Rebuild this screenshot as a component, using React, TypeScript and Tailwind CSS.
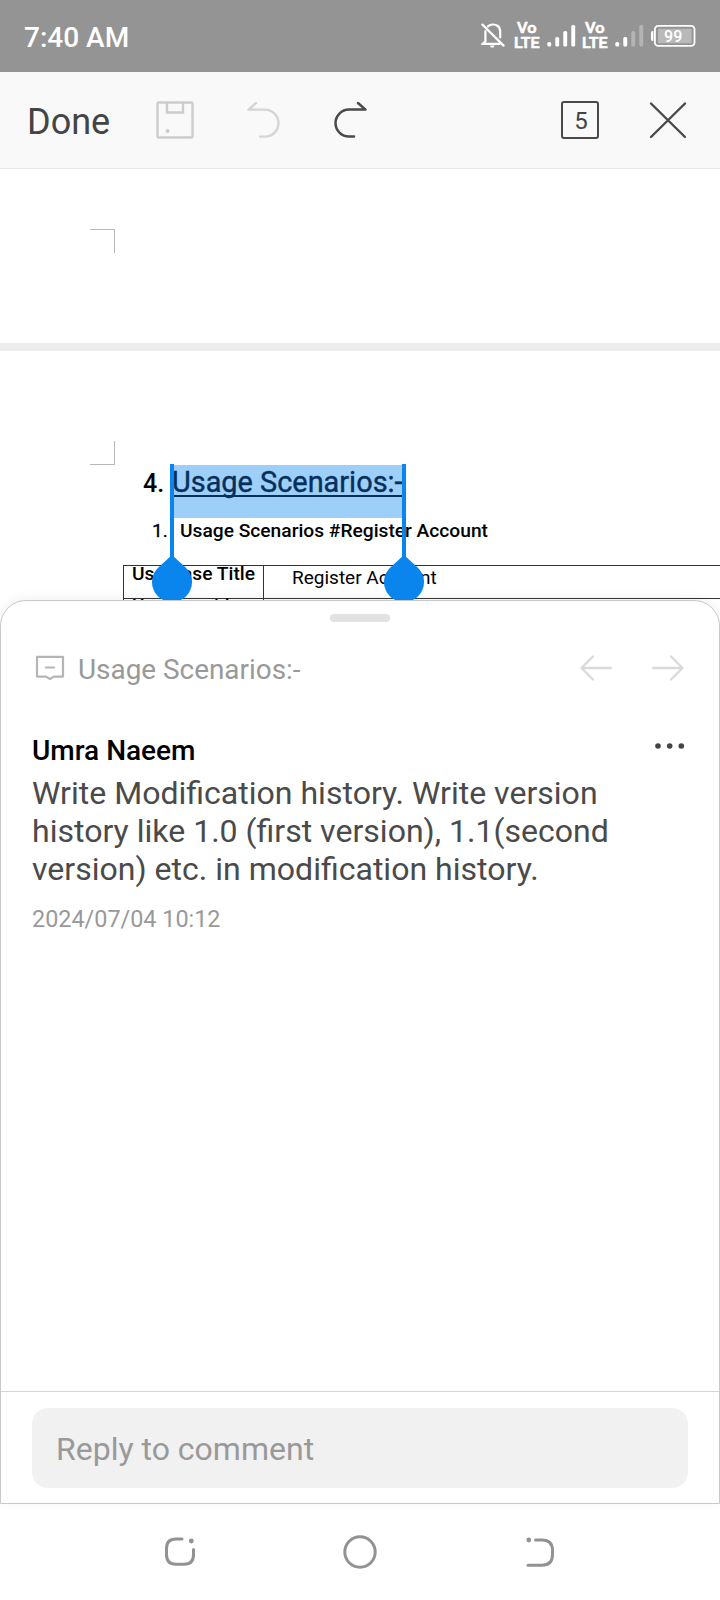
import React from "react";

function Bell() {
  return (
    <svg className="ml-auto h-[26px] w-[24px] shrink-0" viewBox="0 0 24 26" fill="none" stroke="#fff" strokeWidth="2.2" strokeLinecap="round">
      <path d="M1.4 1.6 L22.6 22.6" />
      <path d="M7 3.4 C9.5 1 14 0.9 16.8 3 C18.9 4.6 19.2 7 19.2 9 V14.5" />
      <path d="M4.4 8 V18.2 L1.6 20.9 H18.6" />
      <path d="M8.8 22.6 H13.6 L12.6 24.6 H9.8 Z" fill="#fff" stroke="none" />
    </svg>
  );
}

function VoLte({ className }: { className: string }) {
  return (
    <svg className={`h-[30px] w-[28px] shrink-0 overflow-visible ${className}`} viewBox="0 0 28 30" fill="#fff" stroke="#fff" strokeWidth="0.7" strokeLinejoin="round" fontFamily="Roboto, sans-serif" fontWeight="500">
      <text x="3" y="12.4" fontSize="15" textLength="19.5" lengthAdjust="spacingAndGlyphs">Vo</text>
      <text x="0" y="27.2" fontSize="15.5" textLength="25.6" lengthAdjust="spacingAndGlyphs">LTE</text>
    </svg>
  );
}

function Signal({ level, className }: { level: number; className: string }) {
  const tops = [18, 13, 7, 1];
  return (
    <svg className={`h-[24px] w-[29px] shrink-0 ${className}`} viewBox="0 0 29 24" fill="#fff">
      {tops.map((y, i) => (
        <rect key={y} x={0.3 + i * 8} y={y} width="3.9" height={22.6 - y} rx="1.6" opacity={i < level ? 1 : 0.3} />
      ))}
    </svg>
  );
}

function Battery() {
  return (
    <svg className="ml-[6px] h-[24px] w-[46px] shrink-0" viewBox="0 0 46 24" fontFamily="Roboto, sans-serif">
      <path d="M3.4 7 H2.6 Q1 7 1 9 V15 Q1 17 2.6 17 H3.4 Z" fill="#fff" />
      <rect x="4.9" y="1.9" width="39.6" height="20" rx="3.4" fill="none" stroke="#fff" strokeWidth="1.8" />
      <rect x="8" y="4.8" width="33.6" height="14.4" rx="1" fill="#b9b9b9" />
      <text x="23.2" y="17.6" textAnchor="middle" fontSize="16" fontWeight="500" fill="#fff">99</text>
    </svg>
  );
}

function Drop({ className }: { className: string }) {
  return (
    <div className={`absolute top-[464px] h-[136px] w-[40px] ${className}`}>
      <svg className="h-full w-full" viewBox="0 0 40 136" fill="#0a85ee">
        <rect x="18" y="0" width="4" height="96" />
        <path d="M20 91 L33.4 103.2 A20 20 0 1 1 6.6 103.2 Z" />
      </svg>
    </div>
  );
}

export default function App() {
  return (
    <div className="relative flex h-[1600px] w-[720px] flex-col overflow-hidden bg-white font-[Roboto,sans-serif] whitespace-nowrap">
      <header className="flex h-[72px] shrink-0 items-center bg-[#949494] pr-[24px] pl-[24px] text-white">
        <span className="pt-[3px] text-[28px] font-medium">7:40 AM</span>
        <Bell />
        <VoLte className="ml-[9px]" />
        <Signal level={4} className="ml-[5px]" />
        <VoLte className="ml-[6px]" />
        <Signal level={2} className="ml-[5px]" />
        <Battery />
      </header>

      <nav className="flex h-[97px] shrink-0 items-center border-b border-[#e6e6e6] bg-[#f9f9f9] pl-[27px] text-[#444]">
        <span className="w-[129px] pt-[3px] text-[36px]">Done</span>
        <svg className="h-[38px] w-[38px]" viewBox="0 0 38 38" fill="none" stroke="#ccc" strokeWidth="2.4">
          <rect x="1.5" y="1.5" width="35" height="35" rx="1" />
          <path d="M11 2 V11.5 H27 V2" />
          <circle cx="11.5" cy="30" r="2" fill="#ccc" stroke="none" />
        </svg>
        <svg className="ml-[52px] h-[38px] w-[34px]" viewBox="0 0 34 38" fill="none" stroke="#d5d5d5" strokeWidth="2.4" strokeLinecap="round" strokeLinejoin="round">
          <path d="M10 2 L2.5 8.6 H19 A13.4 13.4 0 0 1 19 35.6 H14" />
        </svg>
        <svg className="ml-[54px] h-[38px] w-[34px]" viewBox="0 0 34 38" fill="none" stroke="#4a4a4a" strokeWidth="2.5" strokeLinecap="round" strokeLinejoin="round">
          <path d="M24 2 L31.5 8.6 H15 A13.4 13.4 0 0 0 15 35.6 H20" />
        </svg>
        <span className="ml-[193px] flex h-[38px] w-[38px] items-center justify-center rounded-[3px] border-[2.5px] border-[#4a4a4a] pt-[2px] pl-[2px] text-[24px]">5</span>
        <svg className="ml-[50px] h-[38px] w-[38px]" viewBox="0 0 38 38" fill="none" stroke="#4a4a4a" strokeWidth="2.4" strokeLinecap="round">
          <path d="M2 2.5 L36 36 M36 2.5 L2 36" />
        </svg>
      </nav>

      <main className="flex h-[431px] shrink-0 flex-col overflow-hidden text-black">
        <div className="h-[174px] shrink-0 pt-[60px] pl-[90px]">
          <div className="h-[24px] w-[25px] border-t border-r border-[#b8b8b8]" />
        </div>
        <div className="h-[8px] shrink-0 bg-[#ededed]" />
        <div className="h-[114px] shrink-0 pt-[90px] pl-[90px]">
          <div className="h-[24px] w-[25px] border-r border-b border-[#b8b8b8]" />
        </div>
        <div className="flex h-[53px] shrink-0 pl-[143px]">
          <span className="w-[29px] pt-[2px] text-[25px] leading-[34px] font-medium">4.</span>
          <span className="h-[53px] w-[232px] bg-[#9ecff8] text-[28.9px] leading-[35px] text-[#06305c]">
            <span className="flex h-[32px] border-b-2 border-[#06305c] [-webkit-text-stroke:0.4px_#06305c]">Usage Scenarios:-</span>
          </span>
        </div>
        <div className="flex h-[47px] shrink-0 pl-[152px] text-[19.2px] leading-[25px]">
          <span className="w-[28px] [-webkit-text-stroke:0.3px_#000]">1.</span>
          <span className="font-medium">Usage Scenarios #Register Account</span>
        </div>
        <div className="ml-[123px] grid shrink-0 grid-cols-[140px_1fr] grid-rows-[33px_33px] border-t border-l border-[#333] text-[19px]">
          <div className="border-r border-b border-[#333] pl-[8px] text-[19.2px] leading-[16px] font-medium">Use Case Title</div>
          <div className="border-b border-[#333] pl-[28px] leading-[24px]">Register Account</div>
          <div className="border-r border-[#333] pl-[8px] leading-[14px] font-medium">Use case id</div>
        </div>
      </main>
      <Drop className="left-[152px]" />
      <Drop className="left-[384px]" />

      <section className="flex h-[904px] shrink-0 flex-col rounded-t-[26px] border border-[#c9c9c9] bg-white shadow-[0_-2px_12px_rgba(0,0,0,0.06)]">
        <div className="mt-[13px] h-[8px] w-[60px] shrink-0 self-center rounded-full bg-[#e2e2e2]" />
        <div className="mt-[26px] flex h-[40px] shrink-0 items-center pr-[35px] pl-[34px]">
          <svg className="h-[26px] w-[30px]" viewBox="0 0 30 26" fill="none" stroke="#b5b5b5" strokeWidth="2.2" strokeLinejoin="round">
            <path d="M2 1.8 H28 V21.6 H19 L15 24 L11 21.6 H2 Z" />
            <path d="M11 12.5 H19" strokeLinecap="round" />
          </svg>
          <span className="ml-[13px] pt-[3px] text-[27.9px] text-[#999]">Usage Scenarios:-</span>
          <svg className="ml-auto h-[26px] w-[32px]" viewBox="0 0 32 26" fill="none" stroke="#dadada" strokeWidth="2.3" strokeLinecap="round" strokeLinejoin="round">
            <path d="M31 13 H1.5 M13 1.5 L1.5 13 L13 24.5" />
          </svg>
          <svg className="ml-[40px] h-[26px] w-[32px]" viewBox="0 0 32 26" fill="none" stroke="#dadada" strokeWidth="2.3" strokeLinecap="round" strokeLinejoin="round">
            <path d="M1 13 H30.5 M19 1.5 L30.5 13 L19 24.5" />
          </svg>
        </div>
        <div className="mt-[42px] flex h-[40px] shrink-0 items-center pr-[34px] pl-[31px]">
          <span className="pt-[1px] text-[28px] font-medium">Umra Naeem</span>
          <svg className="mb-[8px] ml-auto h-[8px] w-[32px]" viewBox="0 0 32 8" fill="#444">
            <circle cx="5" cy="4" r="2.8" />
            <circle cx="16.7" cy="4" r="2.8" />
            <circle cx="28.3" cy="4" r="2.8" />
          </svg>
        </div>
        <p className="mt-[4px] pl-[31px] text-[32.05px] leading-[38px] text-[#4a4a4a]">
          Write Modification history. Write version<br />
          history like 1.0 (first version), 1.1(second<br />
          version) etc. in modification history.
        </p>
        <time className="mt-[15px] pl-[31px] text-[23.4px] leading-[32px] text-[#999]">2024/07/04 10:12</time>
        <div className="mt-auto flex h-[112px] shrink-0 items-center border-t border-[#d4d4d4] px-[31px]">
          <div className="flex h-[80px] w-full items-center rounded-[16px] bg-[#f1f1f1] pl-[24px] text-[32px] text-[#999]">
            <span className="pt-[3px]">Reply to comment</span>
          </div>
        </div>
      </section>

      <footer className="flex h-[96px] items-center pl-[163px]">
        <svg className="h-[36px] w-[34px]" viewBox="0 0 34 36" fill="none" stroke="#929292" strokeWidth="3" strokeLinecap="round">
          <path d="M19 5 H13 Q3.5 5 3.5 14.5 V20.5 Q3.5 30.3 13 30.3 H21 Q30.5 30.3 30.5 20.8 V15.5" />
          <circle cx="28.3" cy="7" r="2.4" fill="#929292" stroke="none" />
        </svg>
        <svg className="ml-[145px] h-[36px] w-[36px]" viewBox="0 0 36 36" fill="none" stroke="#929292" strokeWidth="3">
          <circle cx="18" cy="18" r="15.2" />
        </svg>
        <svg className="ml-[146px] h-[36px] w-[32px]" viewBox="0 0 32 36" fill="none" stroke="#929292" strokeWidth="3" strokeLinecap="round">
          <path d="M11.5 6 H18 Q28.5 6 28.5 16.5 V20.5 Q28.5 31.2 18 31.2 H4" />
          <circle cx="4.8" cy="6" r="2.4" fill="#929292" stroke="none" />
        </svg>
      </footer>
    </div>
  );
}
